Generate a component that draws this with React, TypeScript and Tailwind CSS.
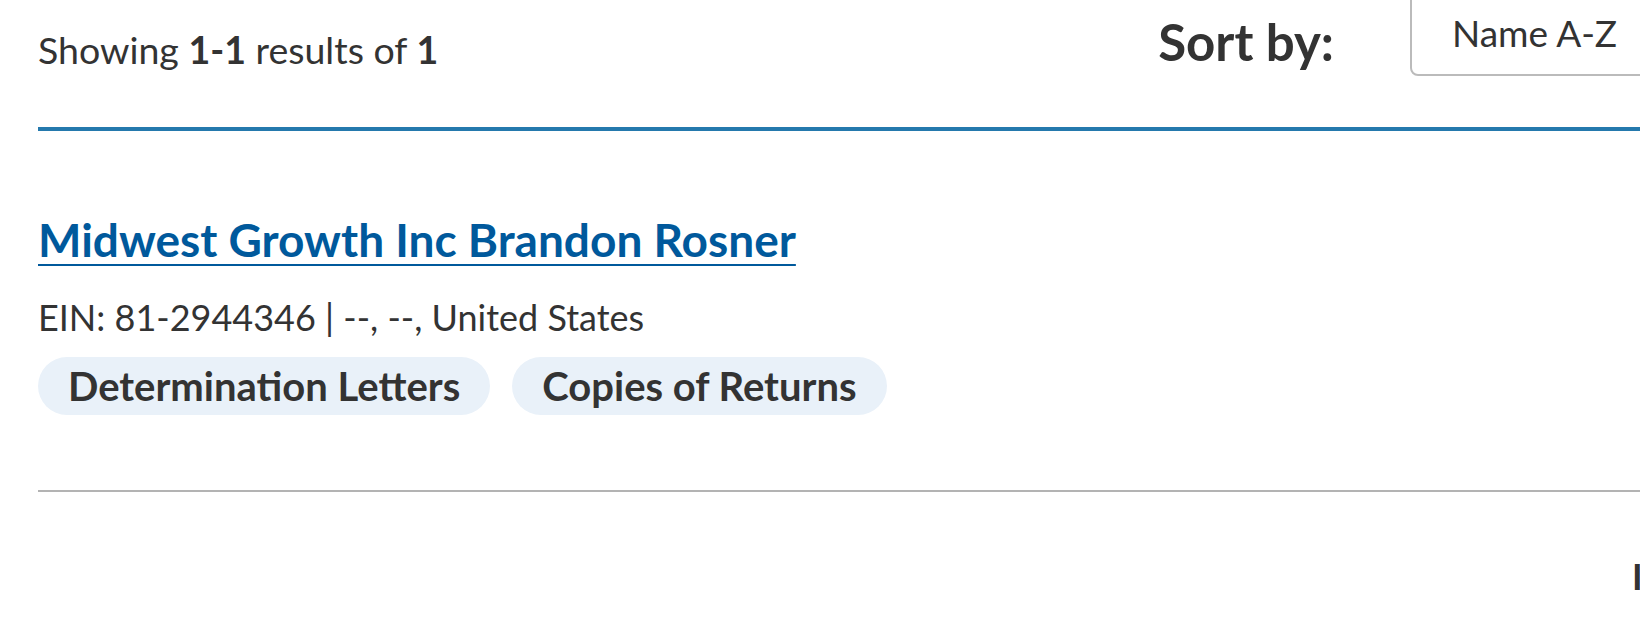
export default function App() {
  return (
    <div className="w-[1640px] h-[625px] overflow-hidden bg-white text-[#333] font-[family-name:Lato,sans-serif]">
      <div className="w-[1800px] pl-[38px]">
        <div className="flex items-start h-[127px]">
          <p className="flex-1 pt-[28px] text-[37.5px] leading-[44px]">
            Showing <b>1-1</b> results of <b>1</b>
          </p>
          <span className="pt-[12px] text-[51px] leading-[60px] font-bold">Sort by:</span>
          <div className="ml-[76px] -mt-[10px] w-[390px] h-[86px] shrink-0 border-2 border-[#bbb] rounded-[8px] pl-[40px] pt-[19px] text-[37px] leading-[44px]">
            Name A-Z
          </div>
        </div>
        <div className="h-[4px] bg-[#2479ad]" />

        <div className="pt-[82px]">
          <a href="#" className="block w-fit text-[46px] leading-[54px] font-bold text-[#00599c] underline underline-offset-[7px] decoration-[2px]">
            Midwest Growth Inc Brandon Rosner
          </a>
          <p className="mt-[28px] text-[36px] leading-[44px]">EIN: 81-2944346 | --, --, United States</p>
          <div className="mt-[18px] flex gap-[22px]">
            <span className="h-[58px] px-[30px] rounded-full bg-[#e9f1f9] flex items-center text-[40px] font-bold">
              Determination Letters
            </span>
            <span className="h-[58px] px-[30px] rounded-full bg-[#e9f1f9] flex items-center text-[40px] font-bold">
              Copies of Returns
            </span>
          </div>
        </div>

        <div className="mt-[75px] h-[2px] bg-[#b3b3b3]" />
        <div className="pl-[1594px] pt-[64px] text-[36px] leading-[40px] font-bold">Items</div>
      </div>
    </div>
  );
}
